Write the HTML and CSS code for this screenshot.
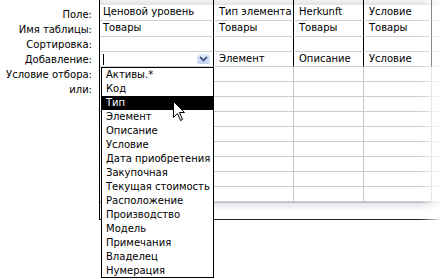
FILE: index.html
```html
<!DOCTYPE html>
<html lang="ru">
<head>
    <meta charset="UTF-8">
    <title>Бланк запроса</title>
    <link rel="stylesheet" href="styles.css">
</head>
<body>
    <div class="design">
        <div class="labels">
            <div>Поле:</div>
            <div>Имя таблицы:</div>
            <div>Сортировка:</div>
            <div>Добавление:</div>
            <div>Условие отбора:</div>
            <div>или:</div>
        </div>

        <div class="grid">
            <div class="cap">
                <span></span><span></span><span></span><span></span><span></span>
            </div>
            <div class="row field r16">
                <div class="cell first">Ценовой уровень</div>
                <div class="cell">Тип элемента</div>
                <div class="cell">Herkunft</div>
                <div class="cell">Условие</div>
                <div class="cell"></div>
            </div>
            <div class="row field r16">
                <div class="cell first">Товары</div>
                <div class="cell">Товары</div>
                <div class="cell">Товары</div>
                <div class="cell">Товары</div>
                <div class="cell"></div>
            </div>
            <div class="row field">
                <div class="cell first"></div>
                <div class="cell"></div>
                <div class="cell"></div>
                <div class="cell"></div>
                <div class="cell"></div>
            </div>
            <div class="row field">
                <div class="cell first combo">
                    <span class="caret"></span>
                    <span class="combo-btn">
                        <svg width="9" height="6" viewBox="0 0 9 6"><path d="M1 1 L4.5 4.5 L8 1" fill="none" stroke="#3d5a8a" stroke-width="1.8"/></svg>
                    </span>
                </div>
                <div class="cell">Элемент</div>
                <div class="cell">Описание</div>
                <div class="cell">Условие</div>
                <div class="cell"></div>
            </div>

            <div class="row crit"><div class="cell"></div><div class="cell"></div><div class="cell"></div><div class="cell"></div><div class="cell"></div></div>
            <div class="row crit"><div class="cell"></div><div class="cell"></div><div class="cell"></div><div class="cell"></div><div class="cell"></div></div>
            <div class="row crit"><div class="cell"></div><div class="cell"></div><div class="cell"></div><div class="cell"></div><div class="cell"></div></div>
            <div class="row crit"><div class="cell"></div><div class="cell"></div><div class="cell"></div><div class="cell"></div><div class="cell"></div></div>
            <div class="row crit"><div class="cell"></div><div class="cell"></div><div class="cell"></div><div class="cell"></div><div class="cell"></div></div>
            <div class="row crit"><div class="cell"></div><div class="cell"></div><div class="cell"></div><div class="cell"></div><div class="cell"></div></div>
            <div class="row crit"><div class="cell"></div><div class="cell"></div><div class="cell"></div><div class="cell"></div><div class="cell"></div></div>
            <div class="row crit"><div class="cell"></div><div class="cell"></div><div class="cell"></div><div class="cell"></div><div class="cell"></div></div>
            <div class="row crit"><div class="cell"></div><div class="cell"></div><div class="cell"></div><div class="cell"></div><div class="cell"></div></div>

            <div class="band"></div>

            <ul class="droplist">
                <li>Активы.*</li>
                <li>Код</li>
                <li class="selected">Тип</li>
                <li>Элемент</li>
                <li>Описание</li>
                <li>Условие</li>
                <li>Дата приобретения</li>
                <li>Закупочная</li>
                <li>Текущая стоимость</li>
                <li>Расположение</li>
                <li>Производство</li>
                <li>Модель</li>
                <li>Примечания</li>
                <li>Владелец</li>
                <li>Нумерация</li>
            </ul>

            <svg class="pointer" width="13" height="21" viewBox="0 0 13 21">
                <path d="M0.5 0.5 L0.5 16.5 L4.5 12.5 L7.5 19.5 L9.5 18.5 L6.5 11.5 L11.5 11.5 Z" fill="#fff" stroke="#000" stroke-width="1"/>
            </svg>
        </div>
    </div>
    <div class="fade"></div>
</body>
</html>
```

FILE: styles.css
```css
/* основа */
html, body {
    height: 100%;
}
body {
    margin: 0;
    background: #fff;
    font-family: "DejaVu Sans", Tahoma, sans-serif;
    font-size: 10px;
    color: #000;
    position: relative;
}
.design {
    display: flex;
    height: 220px;
}

/* подписи строк */
.labels {
    width: 99px;
    box-sizing: border-box;
    padding: 7px 7px 0 0;
    text-align: right;
    line-height: 15px;
}

/* бланк */
.grid {
    flex: 1;
    position: relative;
    border-left: 1px solid #000;
    border-bottom: 1px solid #222;
    display: flex;
    flex-direction: column;
}
.cap, .row {
    display: grid;
    grid-template-columns: 114px 80px 70px 68px 1fr;
}
.cap {
    height: 5px;
    background: linear-gradient(#f2f2f2, #e2e2e2);
}
.cap span {
    border-right: 1px solid #000;
}
.cap span:last-child {
    border-right: none;
}
.row {
    height: 15px;
}
.row.r16 {
    height: 16px;
}
.cell {
    box-sizing: border-box;
    border-right: 1px solid #000;
    border-bottom: 1px solid #cfcfcf;
    padding-left: 5px;
    line-height: 14px;
    white-space: nowrap;
    overflow: hidden;
}
.cell.first {
    padding-left: 3px;
}
.cell:last-child {
    border-right: none;
}
.crit .cell {
    border-right-color: #c8c8c8;
    border-bottom-color: #cdcdcd;
}

/* поле со списком */
.combo {
    display: flex;
    align-items: center;
    justify-content: space-between;
    padding-right: 3px;
}
.caret {
    width: 1px;
    height: 11px;
    background: #000;
}
.combo-btn {
    width: 13px;
    height: 10px;
    display: flex;
    align-items: center;
    justify-content: center;
    background: linear-gradient(#e6eefb, #c3d4f2);
    border-radius: 2px;
}

.band {
    flex: 1;
    border-top: 1px solid #bdbdbd;
    background: linear-gradient(#e3e6ee, #fff 8px);
}

/* раскрытый список */
.droplist {
    position: absolute;
    left: 1px;
    top: 67px;
    width: 113px;
    height: 211px;
    box-sizing: border-box;
    margin: 0;
    padding: 0;
    list-style: none;
    background: #fff;
    border: 1px solid #000;
    z-index: 2;
}
.droplist li {
    height: 14px;
    line-height: 14px;
    padding-left: 4px;
    white-space: nowrap;
}
.droplist li.selected {
    background: #000;
    color: #fff;
}
.pointer {
    position: absolute;
    left: 73px;
    top: 101px;
    z-index: 3;
}

/* затухание справа */
.fade {
    position: absolute;
    top: 0;
    right: 0;
    width: 22px;
    height: 221px;
    background: linear-gradient(to right, rgba(255,255,255,0), #fff);
}
```
